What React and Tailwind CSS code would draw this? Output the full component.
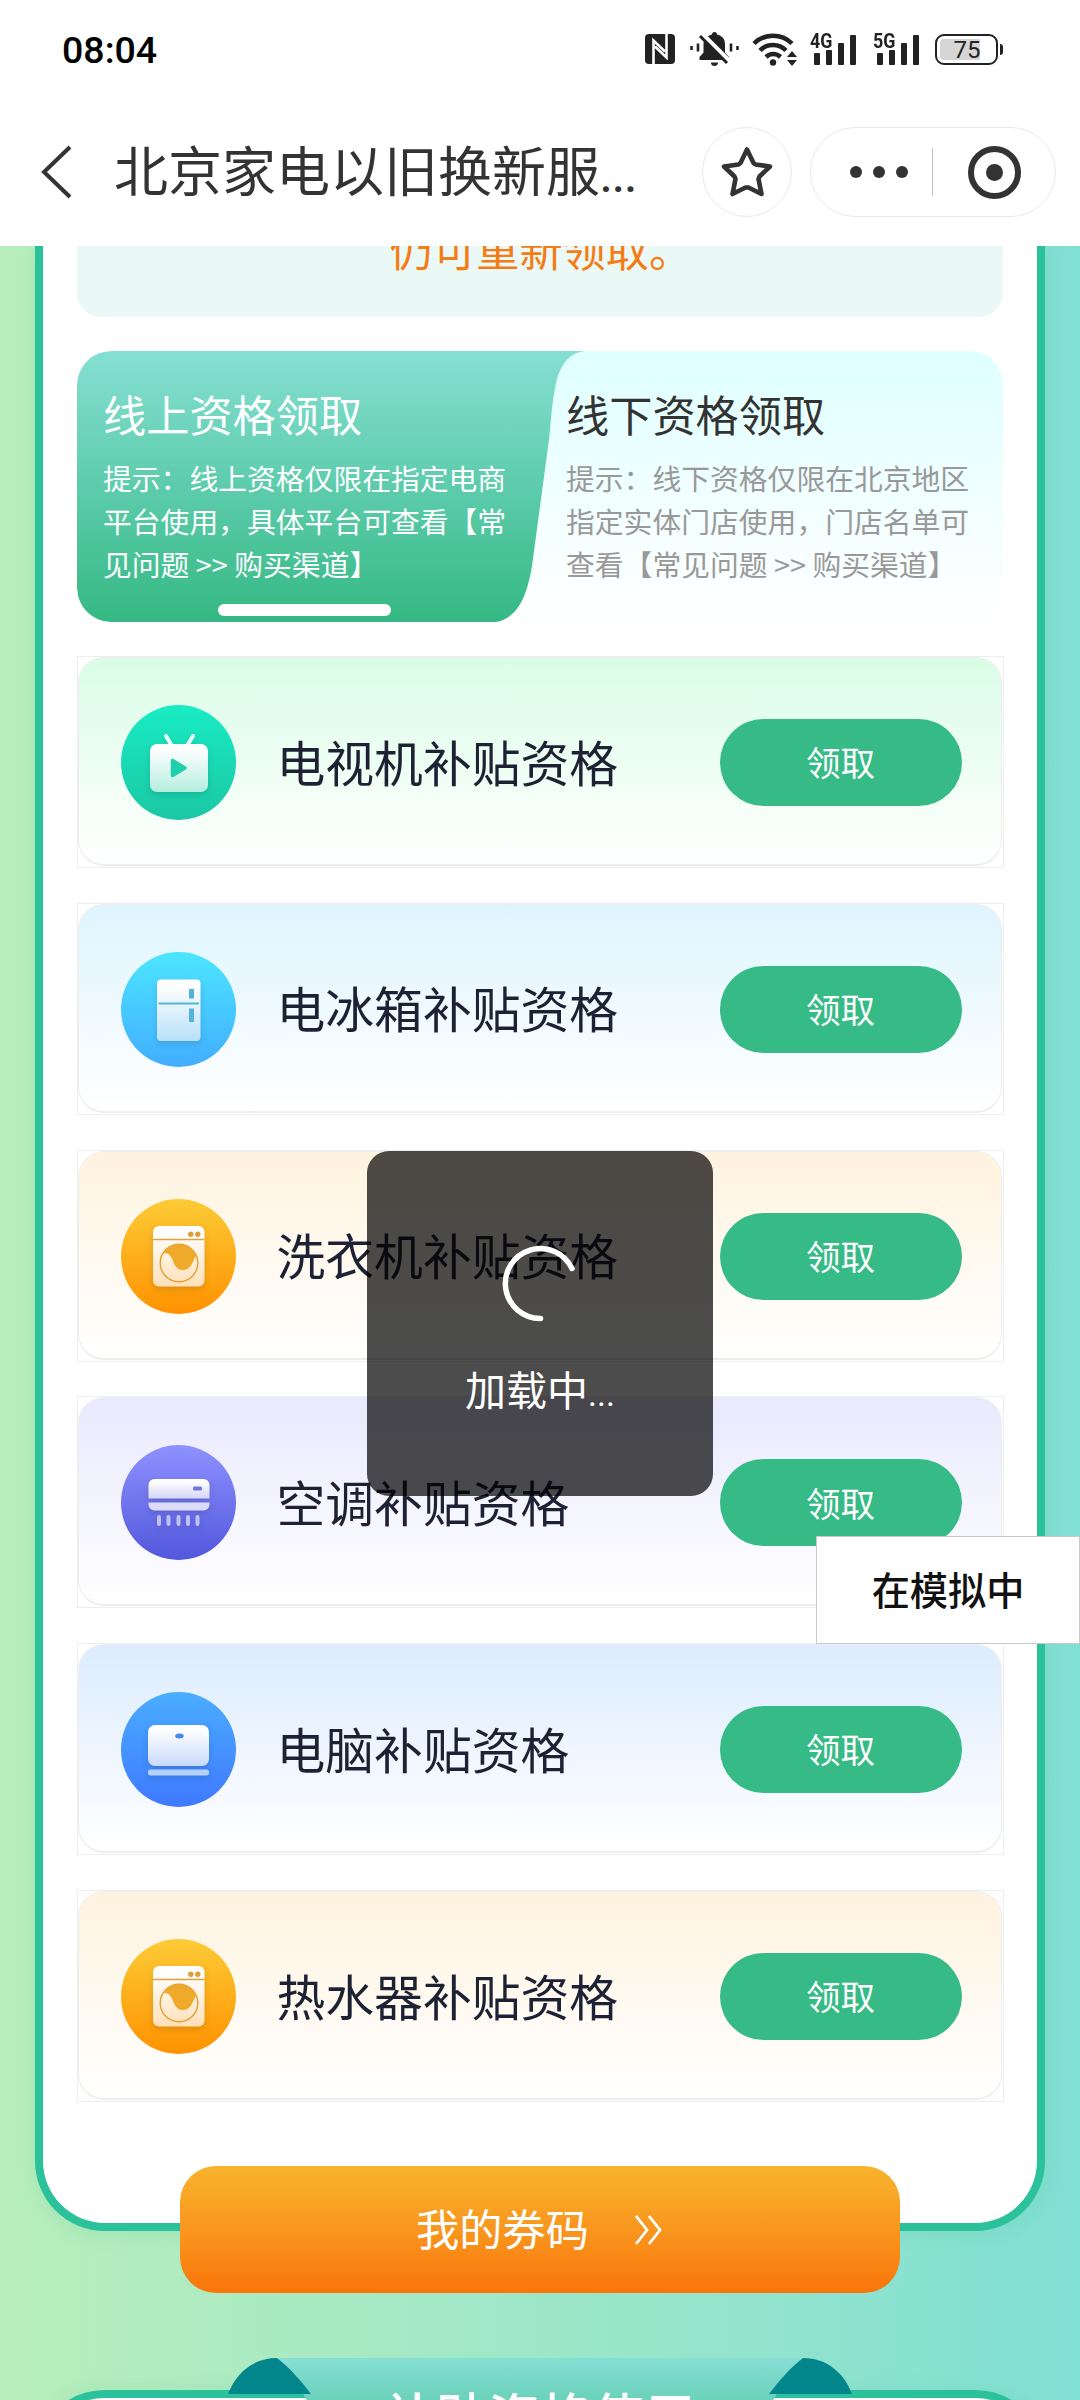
import clsx from 'clsx';

const appliances = [
  { name: '电视机补贴资格', icon: 'tv', bg: 'from-[#dafde6]' },
  { name: '电冰箱补贴资格', icon: 'fridge', bg: 'from-[#def5fe]' },
  { name: '洗衣机补贴资格', icon: 'washer', bg: 'from-[#fff3df]' },
  { name: '空调补贴资格', icon: 'aircon', bg: 'from-[#eae9fe]' },
  { name: '电脑补贴资格', icon: 'computer', bg: 'from-[#dcecfe]' },
  { name: '热水器补贴资格', icon: 'washer', bg: 'from-[#fff3df]' },
];

// Circle gradient and the lower tint of the white glyph
const iconColors = {
  tv: ['#19ecc4', '#1bc7a4', '#b5eedf'],
  fridge: ['#4ce6ff', '#42adff', '#b9e0f8'],
  washer: ['#fccb36', '#ff9200', '#ffe0b8'],
  aircon: ['#8e92ff', '#5257dc', '#d5d6f8'],
  computer: ['#4aadff', '#3f79ff', '#c8daf8'],
};

const ApplianceGlyph = ({ type, fill }) => {
  if (type === 'tv') {
    return (
      <>
        <path d="M45 31l5.500 9M72 31l-5.500 9" stroke="#e9fff9" strokeWidth="4" strokeLinecap="round" />
        <rect x="29" y="39" width="58" height="48" rx="7" fill={fill} />
        <path d="M51.500 55.500v15l12.500-7.500z" fill="#1fcfaa" stroke="#1fcfaa" strokeWidth="3.500" strokeLinejoin="round" />
      </>
    );
  }
  if (type === 'fridge') {
    return (
      <>
        <rect x="36" y="27.500" width="43.500" height="61.500" rx="4" fill={fill} />
        <path d="M37.500 51.500h40.500" stroke="#55b4d8" strokeWidth="2" />
        <path d="M70.500 37v9.500M70.500 56.500v13.500" stroke="#52b3dc" strokeWidth="5" />
      </>
    );
  }
  if (type === 'washer') {
    return (
      <>
        <rect x="32" y="27" width="51.500" height="60.500" rx="6" fill={fill} />
        <path d="M32 40.500h51.500" stroke="#e0a43c" strokeWidth="1.400" />
        <circle cx="69.800" cy="35.200" r="2.700" fill="#dda038" />
        <circle cx="76.800" cy="35.200" r="2.700" fill="#dda038" />
        <circle cx="58" cy="64" r="18.800" fill="none" stroke="#e2a030" strokeWidth="1.400" />
        <path
          d="M42.500 54.500C46 48.500 52 45.500 58 45.500c8 0 14.500 4.500 17 11.500C72 60 71.500 70 63 71c-10 1-9.500-9-14-14.500-2-2.200-4.500-2.500-6.500-2z"
          fill="#efaa2c"
        />
      </>
    );
  }
  if (type === 'aircon') {
    return (
      <>
        <path d="M27.500 53.500V40a6 6 0 0 1 6-6h49a6 6 0 0 1 6 6v13.500z" fill={fill} />
        <path d="M27.500 57.500h61v2a6 6 0 0 1-6 6h-49a6 6 0 0 1-6-6z" fill="#dcdcfa" />
        <rect x="72" y="41.500" width="9" height="4" rx="1.500" fill="#7276e0" />
        <path d="M38 72v7M47.500 72v7M57.500 72v7M67 72v7M76.500 72v7" stroke="#bfc1f8" strokeWidth="4" strokeLinecap="round" />
      </>
    );
  }
  return (
    <>
      <rect x="27" y="33" width="61" height="41" rx="7" fill={fill} />
      <ellipse cx="58.500" cy="44" rx="4.300" ry="2.500" fill="#4a88e8" />
      <rect x="27" y="77.500" width="61" height="6" rx="2.500" fill="#b4d1ff" />
    </>
  );
};

const ApplianceIcon = ({ type, id }) => {
  const [top, bottom, tint] = iconColors[type];
  return (
    <svg viewBox="0 0 115 115" className="size-[115px] shrink-0" fill="none">
      <defs>
        <linearGradient id={`${id}-bg`} x1="0" y1="0" x2="0" y2="1">
          <stop stopColor={top} />
          <stop offset="1" stopColor={bottom} />
        </linearGradient>
        <linearGradient id={`${id}-fg`} x1="0" y1="0" x2="0" y2="1">
          <stop offset=".1" stopColor="#ffffff" />
          <stop offset="1" stopColor={tint} />
        </linearGradient>
      </defs>
      <circle cx="57.500" cy="57.500" r="57.500" fill={`url(#${id}-bg)`} />
      <g className="drop-shadow-[0_3px_3px_rgba(0,0,0,0.12)]">
        <ApplianceGlyph type={type} fill={`url(#${id}-fg)`} />
      </g>
    </svg>
  );
};

const SignalIcon = ({ label }) => (
  <div className="relative">
    <svg width="48" height="34" viewBox="0 0 48 34" fill="#222">
      <rect x="4" y="21" width="6" height="12" rx="1" />
      <rect x="16" y="18" width="6" height="15" rx="1" />
      <rect x="28" y="11" width="6" height="22" rx="1" />
      <rect x="40" y="3" width="6" height="30" rx="1" />
    </svg>
    <span className="absolute -top-[1px] left-0 origin-left scale-x-[0.85] font-['Roboto',sans-serif] text-[21px] leading-[20px] font-bold text-[#222]">
      {label}
    </span>
  </div>
);

const StatusBar = () => (
  <div className="flex h-[98px] items-center justify-between pl-[62px] pr-[77px]">
    <span className="pt-[3px] font-['Roboto',sans-serif] text-[37.500px] font-medium leading-none text-black">08:04</span>
    <div className="flex items-center">
      {/* NFC */}
      <svg width="30" height="32" viewBox="0 0 30 32">
        <rect y="1" width="30" height="30" rx="4" fill="#222" />
        <path d="M8.500 31V7.500L20 18.500M21.500 1v23.500L10 13.500" fill="none" stroke="#fff" strokeWidth="2.600" />
      </svg>
      {/* Muted bell */}
      <svg className="ml-[15px]" width="49" height="36" viewBox="0 0 49 36">
        <path d="M1.500 15v4M8 12.500v8M41 12.500v8M47.500 15v4" stroke="#222" strokeWidth="2.600" />
        <path d="M9.500 29v-3l4-4.500V13c0-5 4-8.500 8.500-9.500a2.500 2.500 0 0 1 5 0C32 4.500 35 8 35 13v8.500l4 4.500v3z" fill="#222" />
        <path d="M21 31.500h7a3.500 3.500 0 0 1-7 0z" fill="#222" />
        <path d="M12.500 3.500l27 27" stroke="#fff" strokeWidth="5" />
        <path d="M10 5l27 27" stroke="#222" strokeWidth="3" />
      </svg>
      {/* Wifi */}
      <svg className="ml-[13px]" width="45" height="36" viewBox="0 0 45 36" fill="none" stroke="#222" strokeWidth="4.500">
        <path d="M2 12.500a27 27 0 0 1 38 0M8 19.500a18 18 0 0 1 26 0M14 26a10.500 10.500 0 0 1 14.500 0" />
        <circle cx="21" cy="31.500" r="3.200" fill="#222" stroke="none" />
        <path d="M40 20l5 6H35zM40 35l5-6H35z" fill="#222" stroke="none" />
      </svg>
      <div className="ml-[13px] flex gap-[15px]">
        <SignalIcon label="4G" />
        <SignalIcon label="5G" />
      </div>
      {/* Battery */}
      <div className="ml-[14px] flex items-center gap-[2px] pt-px">
        <div className="flex h-[31px] w-[63px] rounded-[9px] border-[2.500px] border-[#222] p-[3px]">
          <div className="flex h-full w-[40px] items-center justify-center whitespace-nowrap rounded-l-[4px] bg-[#d6d6d6] pl-[14px] font-['Roboto',sans-serif] text-[24px] text-[#222]">
            75
          </div>
        </div>
        <div className="h-[11px] w-[3px] rounded-r bg-[#222]" />
      </div>
    </div>
  </div>
);

const NavBar = () => (
  <div className="flex h-[148px] items-center pl-[41px] pr-[24px]">
    <svg width="32" height="54" viewBox="0 0 32 54" fill="none" stroke="#333" strokeWidth="4">
      <path d="M29 2L3 27l26 25" />
    </svg>
    <h1 className="mb-[4px] ml-[41px] flex w-[588px] items-baseline whitespace-nowrap text-[54px] leading-none text-[#333]">
      北京家电以旧换新服<span className="font-['Roboto',sans-serif] text-[44px] font-medium">...</span>
    </h1>
    <div className="flex size-[90px] shrink-0 items-center justify-center rounded-full border border-[#e9e9e9]">
      <svg width="52" height="52" viewBox="0 0 52 52" fill="none" stroke="#333" strokeWidth="4.600" strokeLinejoin="round">
        <path d="M26 3.500l6.500 13.500 2 1.500 14.500 2-10.500 10-1 2.500L40.500 48 27.500 41.500h-3L11.500 48l3-15-1-2.500L3 20.500l14.500-2 2-1.500z" />
      </svg>
    </div>
    <div className="ml-[18px] flex h-[90px] w-[246px] shrink-0 items-center rounded-full border border-[#e9e9e9] pl-[39px]">
      <div className="flex w-[82px] gap-[11px]">
        <i className="size-[12px] rounded-full bg-[#333]" />
        <i className="size-[12px] rounded-full bg-[#333]" />
        <i className="size-[12px] rounded-full bg-[#333]" />
      </div>
      <div className="h-[48px] w-px bg-[#c4c4c4]" />
      <div className="ml-[35px] flex size-[53px] items-center justify-center rounded-full border-[6px] border-[#333]">
        <div className="size-[17px] rounded-full bg-[#333]" />
      </div>
    </div>
  </div>
);

const ChannelTabs = () => (
  <div className="relative mt-[34px] flex h-[271px] w-[926px] overflow-hidden rounded-[34px] bg-linear-to-b from-[#dfffff] to-white">
    <svg className="absolute left-0 top-0" width="926" height="271" viewBox="0 0 926 271">
      <defs>
        <linearGradient id="tab" x1="0" y1="0" x2="0" y2="1">
          <stop stopColor="#86dfd3" />
          <stop offset="1" stopColor="#35b984" />
        </linearGradient>
      </defs>
      <path
        d="M34 0H507C490 3 483 16 479 32 474 55 474 75 471 96L455 215C450 245 441 267 419 271H34A34 34 0 0 1 0 237V34A34 34 0 0 1 34 0z"
        fill="url(#tab)"
      />
    </svg>
    <div className="relative w-[463px] pl-[26px] pt-[35px] text-white">
      <h2 className="text-[43.200px] leading-[54px]">线上资格领取</h2>
      <p className="mt-[16px] w-[406px] text-[28.800px] leading-[43px]">
        提示：线上资格仅限在指定电商<br />平台使用，具体平台可查看【常<br />见问题 &gt;&gt; 购买渠道】
      </p>
      <div className="ml-[115px] mt-[19px] h-[12px] w-[173px] rounded-[6px] bg-white" />
    </div>
    <div className="relative w-[463px] pl-[26px] pt-[35px]">
      <h2 className="text-[43.200px] leading-[54px] text-[#333]">线下资格领取</h2>
      <p className="mt-[16px] w-[406px] text-[28.800px] leading-[43px] text-[#999]">
        提示：线下资格仅限在北京地区<br />指定实体门店使用，门店名单可<br />查看【常见问题 &gt;&gt; 购买渠道】
      </p>
    </div>
  </div>
);

const ApplianceCard = ({ item, id }) => (
  <div className="h-[212px] w-[927px] border border-[#eeeeee] pb-px pr-px">
    <div className={clsx('flex h-full items-center rounded-[26px] border border-b-2 border-[#eeeeee] bg-linear-to-b to-white pl-[42px] pr-[39px] pt-[3px]', item.bg)}>
      <ApplianceIcon type={item.icon} id={id} />
      <span className="mb-[3px] ml-[41px] flex-1 whitespace-nowrap text-[48.800px] leading-none text-[#1c2233]">{item.name}</span>
      <button className="h-[87px] w-[242px] rounded-full bg-[#36ba86] pb-[2px] text-[34.560px] leading-none text-white">领取</button>
    </div>
  </div>
);

const LoadingToast = () => (
  <div className="absolute left-[367px] top-[1151px] flex h-[345px] w-[346px] flex-col items-center rounded-[22px] bg-black/70 pt-[94px] text-white">
    <svg width="77" height="77" viewBox="0 0 77 77" fill="none" stroke="#fff" strokeWidth="5.500" strokeLinecap="round">
      <path d="M38.500 73.500A35 35 0 1 1 70 23.500" />
    </svg>
    <span className="mt-[44px] flex items-baseline whitespace-nowrap text-[41px] leading-[44px]">
      加载中<span className="font-['Roboto',sans-serif] text-[34px]">...</span>
    </span>
  </div>
);

export default function App() {
  return (
    <div className="relative h-[2400px] w-[1080px] overflow-hidden bg-linear-to-r from-[#b8eebb] to-[#80dfd3] font-['Noto_Sans_CJK_SC',sans-serif]">
      <header className="relative z-10 h-[246px] bg-white">
        <StatusBar />
        <NavBar />
      </header>

      <main className="mx-[35px] flex h-[1985px] flex-col items-center rounded-b-[70px] border-8 border-t-0 border-[#2bc19b] bg-white shadow-[0_4px_18px_rgba(60,180,140,0.15)]">
        <div className="h-[71px] w-[926px] shrink-0 overflow-hidden rounded-b-[24px] bg-[#eaf8f6]">
          <p className="-mt-[24px] pl-[2px] text-center text-[43.200px] leading-[52px] text-[#f57c14]">仍可重新领取。</p>
        </div>
        <ChannelTabs />
        <div className="mt-[34px] flex flex-col gap-[34.800px]">
          {appliances.map((item, i) => (
            <ApplianceCard key={item.name} item={item} id={`appliance-${i}`} />
          ))}
        </div>
      </main>

      {/* Overlaps the bottom edge of the card */}
      <button className="relative mx-auto -mt-[65px] flex h-[127px] w-[720px] items-center justify-center rounded-[36px] bg-linear-to-b from-[#f7b42d] to-[#f97508] text-white">
        <span className="mb-[3px] text-[43.200px] leading-none">我的券码</span>
        <svg className="ml-[43px]" width="32" height="32" viewBox="0 0 32 32" fill="none" stroke="#fff" strokeWidth="2.800">
          <path d="M4 2l11 14L4 30M17 2l11 14-11 14" />
        </svg>
      </button>

      <section className="relative mx-[35px] mt-[97px] h-[160px] rounded-t-[70px] border-8 border-[#2bc19b] bg-white shadow-[0_0_18px_rgba(60,180,140,0.12)]">
        <svg className="absolute -top-[40px] left-[185px]" width="624" height="60" viewBox="0 0 624 60">
          <defs>
            <linearGradient id="ribbon" x1="0" y1="0" x2="0" y2="1">
              <stop stopColor="#86dfd3" />
              <stop offset="1" stopColor="#5fccb0" />
            </linearGradient>
          </defs>
          <path d="M49 0H575C560 18 548 36 535 60H89C76 36 64 18 49 0z" fill="url(#ribbon)" />
          <path d="M0 36C8 15 25 0 49 0 62 10 73 23 83 36z" fill="#03868b" />
          <path d="M624 36C616 15 599 0 575 0 562 10 551 23 541 36z" fill="#03868b" />
        </svg>
        <h2 className="relative -mt-[9px] text-center text-[51.840px] leading-[52px] font-medium text-white">补贴资格使用</h2>
      </section>

      <LoadingToast />
      <div className="absolute left-[816px] top-[1536px] flex h-[108px] w-[264px] items-center justify-center border border-[#c8c8c8] bg-white pb-[2px] text-[38.200px] leading-none font-medium text-[#111]">
        在模拟中
      </div>
    </div>
  );
}
